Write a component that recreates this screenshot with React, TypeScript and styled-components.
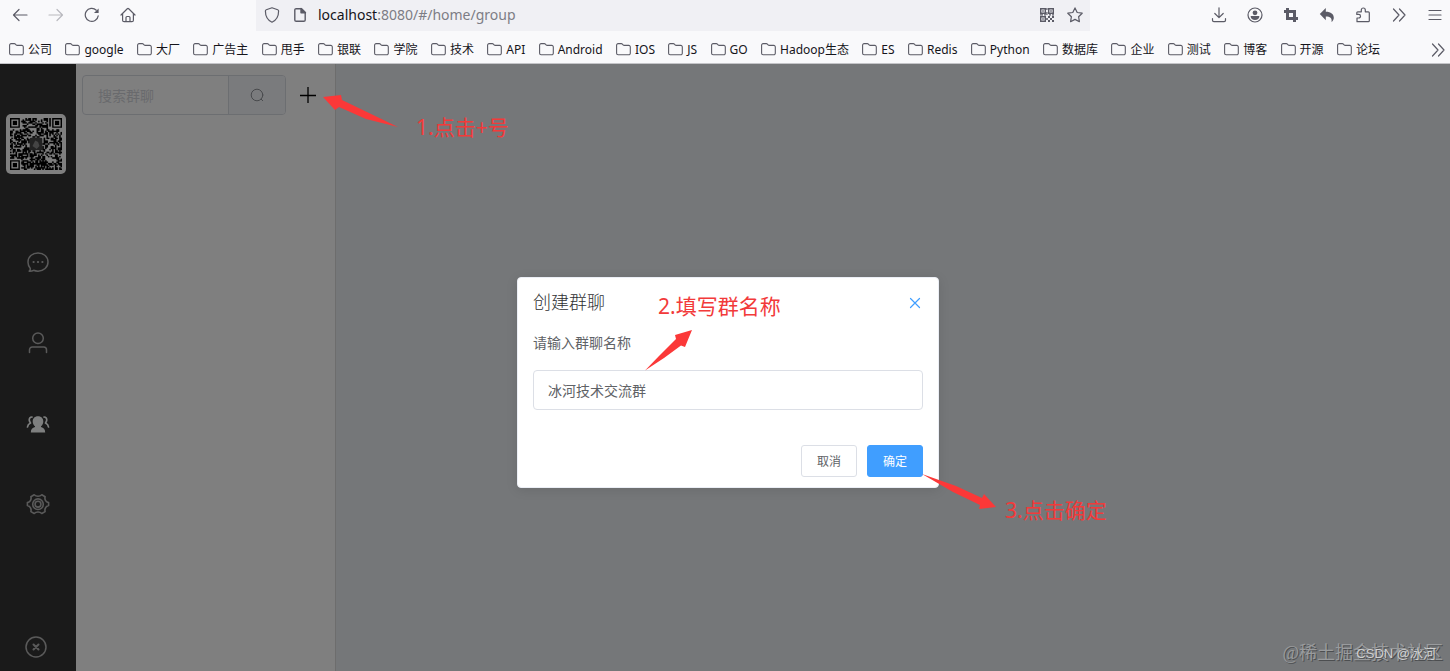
import React from "react";
import styled, { createGlobalStyle } from "styled-components";

const GlobalStyle = createGlobalStyle`
  *, *::before, *::after { box-sizing: border-box; }
  body { margin: 0; font-family: "Noto Sans", "Noto Sans CJK SC", sans-serif; }
  button, input { font-family: inherit; }
`;

const Shell = styled.div`
  display: flex;
  flex-direction: column;
  min-height: 100vh;
  overflow: hidden;
`;

/* ---------- browser chrome ---------- */

const Chrome = styled.header`
  background: #f9f9fb;
  border-bottom: 1px solid #c4c4c8;
`;

const Toolbar = styled.div`
  display: flex;
  height: 31px;
`;

const ToolGroup = styled.div<{ $side: "left" | "right" }>`
  display: flex;
  flex: none;
  align-items: center;
  gap: 20px;
  width: ${(p) => (p.$side === "left" ? 256 : 360)}px;
  padding: ${(p) => (p.$side === "left" ? "0 0 1px 12px" : "0 7px 1px 0")};
  justify-content: ${(p) => (p.$side === "left" ? "flex-start" : "flex-end")};
`;

const IconButton = styled.button<{ $dim?: boolean }>`
  display: flex;
  flex: none;
  padding: 0;
  border: 0;
  background: none;
  color: ${(p) => (p.$dim ? "#b9b9be" : "#5b5b66")};
  cursor: pointer;
`;

const AddressBar = styled.div`
  display: flex;
  flex: 1;
  align-items: center;
  gap: 12px;
  padding: 0 7px 1px 8px;
  background: #f0f0f4;
`;

const Url = styled.a`
  flex: 1;
  margin-left: -2px;
  color: #7d7d85;
  font-size: 14px;
  line-height: 20px;
  text-decoration: none;
`;

const Host = styled.span`
  color: #15141a;
`;

const BookmarkBar = styled.nav`
  display: flex;
  align-items: center;
  gap: 50px;
  height: 32px;
  padding: 5px 4px 0 9px;
`;

const BookmarkList = styled.div`
  display: flex;
  flex: 1;
  justify-content: space-between;
`;

const Bookmark = styled.a`
  display: flex;
  align-items: center;
  gap: 4px;
  color: #15141a;
  font-size: 12px;
  line-height: 18px;
  white-space: nowrap;
  text-decoration: none;

  svg { color: #5b5b66; }
`;

/* ---------- chat application ---------- */

const Page = styled.div`
  position: relative;
  display: flex;
  flex: 1;
`;

const Sidebar = styled.aside`
  display: flex;
  flex: none;
  flex-direction: column;
  align-items: center;
  width: 76px;
  padding: 50px 0 12px;
  background: #353535;
`;

const Avatar = styled.button`
  display: flex;
  width: 60px;
  height: 60px;
  margin-right: 4px;
  padding: 4px;
  border: 0;
  border-radius: 5px;
  background: #fff;
`;

const SideNav = styled.nav`
  display: flex;
  flex: 1;
  flex-direction: column;
  gap: 57px;
  margin-top: 76px;
`;

const SideLink = styled.a<{ $active?: boolean }>`
  display: flex;
  color: ${(p) => (p.$active ? "#fcfffe" : "#b4b4b4")};
`;

const Exit = styled.button`
  display: flex;
  margin-right: 4px;
  padding: 0;
  border: 0;
  background: none;
  color: #b4b4b4;
`;

const GroupPanel = styled.section`
  flex: none;
  width: 260px;
  padding: 11px 0 0 6px;
  background: #fff;
  border-right: 1px solid #dadada;
`;

const SearchRow = styled.div`
  display: flex;
  align-items: center;
  gap: 14px;
`;

const SearchBox = styled.form`
  display: flex;
  width: 204px;
  height: 40px;
  border: 1px solid #d9dce2;
  border-radius: 4px;
  overflow: hidden;
`;

const SearchInput = styled.input`
  flex: 1;
  min-width: 0;
  padding: 0 15px;
  border: 0;
  background: none;
  font-size: 14px;

  &::placeholder { color: #d3d5da; }
`;

const SearchButton = styled.button`
  display: flex;
  align-items: center;
  justify-content: center;
  width: 57px;
  padding: 0;
  border: 0;
  border-left: 1px solid #d9dce2;
  background: #f5f7fa;
  color: #909399;
`;

const AddButton = styled.button`
  display: flex;
  padding: 0;
  border: 0;
  background: none;
  color: #000;
`;

const Conversation = styled.main`
  flex: 1;
  background: #eaeef2;
`;

const Overlay = styled.div`
  position: absolute;
  inset: 0;
  display: flex;
  align-items: center;
  justify-content: center;
  padding: 30px 0 0 6px;
  background: rgba(0, 0, 0, 0.5);
`;

const Dialog = styled.form`
  position: relative;
  width: 422px;
  padding-bottom: 10px;
  border: 1px solid #ebeef5;
  border-radius: 4px;
  background: #fff;
  box-shadow: 0 2px 12px rgba(0, 0, 0, 0.1);
`;

const DialogHeader = styled.div`
  display: flex;
  align-items: center;
  justify-content: space-between;
  padding: 15px 15px 10px;
`;

const DialogTitle = styled.h1`
  margin: 0;
  color: #303133;
  font-size: 18px;
  font-weight: 300;
  line-height: 18px;
`;

const CloseButton = styled.button`
  display: flex;
  padding: 0;
  border: 0;
  background: none;
  color: #409eff;
`;

const DialogBody = styled.div`
  display: flex;
  flex-direction: column;
  gap: 15px;
  padding: 10px 15px 30px;
`;

const Label = styled.label`
  color: #606266;
  font-size: 14px;
  line-height: 24px;
`;

const TextField = styled.input`
  width: 100%;
  height: 40px;
  padding: 0 14px;
  border: 1px solid #dcdfe6;
  border-radius: 4px;
  color: #606266;
  font-size: 14px;
`;

const DialogActions = styled.div`
  display: flex;
  justify-content: flex-end;
  gap: 10px;
  padding: 5px 15px 0;
`;

const ActionButton = styled.button<{ $primary?: boolean }>`
  width: 56px;
  height: 32px;
  padding: 0;
  border: 1px solid ${(p) => (p.$primary ? "#409eff" : "#dcdfe6")};
  border-radius: 3px;
  background: ${(p) => (p.$primary ? "#409eff" : "#fff")};
  color: ${(p) => (p.$primary ? "#fff" : "#606266")};
  font-size: 12px;
`;

/* ---------- notes drawn over the page ---------- */

const Note = styled.span<{ $x: number; $y: number }>`
  position: absolute;
  left: ${(p) => p.$x}px;
  top: ${(p) => p.$y}px;
  color: #f23a3a;
  font-size: 21px;
  line-height: 30px;
  white-space: nowrap;
`;

const Arrow = styled.svg<{ $x: number; $y: number }>`
  position: absolute;
  left: ${(p) => p.$x}px;
  top: ${(p) => p.$y}px;
  fill: #fb3838;
  pointer-events: none;
`;

const SiteMark = styled.span`
  position: absolute;
  right: 7px;
  bottom: 4px;
  color: #999b9d;
  font-family: "Liberation Serif", "Noto Sans CJK SC", serif;
  font-size: 18px;
  line-height: 28px;
  text-shadow: 1px 1px 0 #4c4e50;
`;

const AuthorMark = styled.span`
  position: absolute;
  right: 14px;
  bottom: 7px;
  color: #cfd0d1;
  font-family: "Liberation Sans", "Noto Sans CJK SC", sans-serif;
  font-size: 13px;
  line-height: 20px;
  text-shadow: 1px 1px 0 #55575a;
`;

/* ---------- icons ---------- */

type IconProps = { size?: number; box?: number; width?: number; children: React.ReactNode };

const Icon = ({ size = 16, box = 16, width = 1.2, children }: IconProps) => (
  <svg
    width={size}
    height={size}
    viewBox={`0 0 ${box} ${box}`}
    fill="none"
    stroke="currentColor"
    strokeWidth={width}
    strokeLinecap="round"
    strokeLinejoin="round"
    aria-hidden="true"
  >
    {children}
  </svg>
);

const FolderIcon = () => (
  <svg width="15" height="14" viewBox="0 0 15 14" fill="none" stroke="currentColor" strokeWidth="1.1" aria-hidden="true">
    <path d="M.6 10.3V2.1A1.500 1.500 0 0 1 2.100.6h3.200c.4 0 .8.2 1.100.5l.9 1c.2.2.5.3.8.3h4.700a1.500 1.500 0 0 1 1.500 1.500v6.400a1.500 1.500 0 0 1-1.500 1.500H2.100a1.500 1.500 0 0 1-1.500-1.500z" />
  </svg>
);

const ChevronsIcon = () => (
  <Icon><path d="M2.500 2l5.500 6-5.500 6M8.500 2l5.500 6-5.500 6" /></Icon>
);

const SmallQrIcon = () => (
  <Icon width={1.4}>
    <path strokeLinecap="butt" strokeLinejoin="miter" d="M1.700 1.700h4.600v4.600H1.700zM9.700 1.700h4.600v4.600H9.700zM1.700 9.700h4.600v4.600H1.700z" />
    <path fill="currentColor" stroke="none" d="M3.300 3.300h1.400v1.400H3.300zM11.300 3.300h1.400v1.400h-1.400zM3.300 11.300h1.400v1.400H3.300zM7.300 1h1.200v2H7.300zM7.300 5h1.200v3H7.300zM1 7.300h3v1.200H1zM5 7.300h2v1.200H5zM9 9h2v2H9zM11 11h2v2h-2zM13 9h2v2h-2zM9 13h2v2H9zM13 13h2v2h-2zM7.200 11h1.600v2H7.200zM10 7.300h2v1.200h-2zM13 7.300h2v1.200h-2z" />
  </Icon>
);

const QR_SIZE = 37;

const inFinder = (x: number, y: number) =>
  (x < 8 && y < 8) || (x > QR_SIZE - 9 && y < 8) || (x < 8 && y > QR_SIZE - 9);

const qrModules = (() => {
  let seed = 20231;
  let path = "";
  for (let y = 0; y < QR_SIZE; y++) {
    for (let x = 0; x < QR_SIZE; x++) {
      seed = (seed * 1103515245 + 12345) % 2147483648;
      const centre = x > 13 && x < 23 && y > 13 && y < 23;
      if (!inFinder(x, y) && !centre && seed / 2147483648 > 0.46) {
        path += `M${x} ${y}h1v1h-1z`;
      }
    }
  }
  return path;
})();

const QrCode = () => (
  <svg width="52" height="52" viewBox="0 0 37 37" aria-hidden="true">
    <path d={qrModules} stroke="#000" strokeWidth="0.15" />
    {[[0, 0], [30, 0], [0, 30]].map(([x, y]) => (
      <g key={`${x}-${y}`}>
        <path fillRule="evenodd" d={`M${x} ${y}h7v7h-7zM${x + 1} ${y + 1}v5h5v-5z`} />
        <rect x={x + 2} y={y + 2} width="3" height="3" />
      </g>
    ))}
    <rect x="14" y="14" width="9" height="9" rx="1" fill="#444" />
    <path d="M16 20l2-4 2 1 1 3-2 2z" fill="#888" />
  </svg>
);

const ChatIcon = () => (
  <Icon size={24} box={24} width={1.5}>
    <path d="M3.200 21.200c1-.8 1.300-1.800 1-3A9.300 9.300 0 0 1 2 12c0-5.200 4.300-9 10-9s10 3.800 10 9-4.300 9.200-10 9.200c-1.600 0-3.100-.3-4.400-.9-1.200.7-2.700 1-4.400.9z" />
    <path strokeWidth="2" d="M7.500 12h.2M11.900 12h.2M16.300 12h.2" />
  </Icon>
);

const UserIcon = () => (
  <Icon size={24} box={24} width={1.5}>
    <circle cx="12" cy="7.3" r="5.3" />
    <path d="M3.500 21.500v-2.700a2.800 2.800 0 0 1 2.800-2.800h11.400a2.800 2.800 0 0 1 2.800 2.800v2.700" />
  </Icon>
);

const GroupIcon = () => (
  <Icon size={24} box={24} width={1.7}>
    <path fill="currentColor" stroke="none" d="M12 4.200c3.300 0 5.300 2.200 5.300 5.200 0 2.200-1 3.800-2.300 4.900v.8c2.500.7 4.200 2.100 4.200 5.400H4.800c0-3.300 1.700-4.700 4.200-5.400v-.8c-1.300-1.100-2.300-2.700-2.300-4.900 0-3 2-5.200 5.300-5.200z" />
    <path d="M6 5c-2 0-3 1.500-2.700 3.400.2 1.200.6 1.800 1.200 2.600-1.700.8-2.800 1.900-3 4M18 5c2 0 3 1.500 2.700 3.400-.2 1.200-.6 1.800-1.200 2.600 1.700.8 2.800 1.900 3 4" />
  </Icon>
);

const GearIcon = () => (
  <Icon size={24} box={24} width={1.6}>
    <path d="M8.200 1.800c1.100 1.100 2.400 1.400 3.800 1.400s2.700-.3 3.800-1.400l3.300 1.900c-.4 1.600-.2 2.800.5 3.900.6 1.100 1.500 1.700 3 2v3c-1.500.4-2.400 1-3 2.100-.7 1.100-.9 2.300-.5 3.900l-3.300 1.900c-1.100-1.100-2.400-1.500-3.800-1.500s-2.700.4-3.800 1.500l-3.300-1.900c.4-1.600.2-2.800-.5-3.900-.6-1.100-1.500-1.700-3-2.100v-3c1.500-.3 2.400-.9 3-2 .7-1.100.9-2.300.5-3.900z" />
    <circle cx="12" cy="11.2" r="5.3" />
    <circle cx="12" cy="11.2" r="2.900" />
  </Icon>
);

const bookmarks = [
  "公司", "google", "大厂", "广告主", "甩手", "银联", "学院", "技术", "API", "Android", "IOS", "JS",
  "GO", "Hadoop生态", "ES", "Redis", "Python", "数据库", "企业", "测试", "博客", "开源", "论坛",
];

const sideLinks = [
  { name: "消息", href: "#/home/chat", icon: <ChatIcon /> },
  { name: "好友", href: "#/home/friend", icon: <UserIcon /> },
  { name: "群聊", href: "#/home/group", icon: <GroupIcon />, active: true },
  { name: "设置", href: "#/home/setting", icon: <GearIcon /> },
];

const BrowserChrome = () => (
  <Chrome>
    <Toolbar>
      <ToolGroup $side="left">
        <IconButton aria-label="后退"><Icon><path d="M15 8H1.500M7 2.500L1.500 8 7 13.500" /></Icon></IconButton>
        <IconButton aria-label="前进" $dim><Icon><path d="M1 8h13.500M9 2.500L14.500 8 9 13.500" /></Icon></IconButton>
        <IconButton aria-label="刷新">
          <Icon>
            <path d="M14.200 8.800A6.500 6.500 0 1 1 12.300 3.200" />
            <path d="M14.600 1.500v4.600H10z" fill="currentColor" stroke="none" />
          </Icon>
        </IconButton>
        <IconButton aria-label="主页">
          <Icon>
            <path d="M1 8l6.300-6.200a1 1 0 0 1 1.400 0L15 8M2.600 6.800v6.400c0 .9.600 1.500 1.500 1.500h7.800c.9 0 1.500-.6 1.500-1.500V6.800" />
            <path d="M6 14.500v-4A1 1 0 0 1 7 9.500h2a1 1 0 0 1 1 1v4" />
          </Icon>
        </IconButton>
      </ToolGroup>
      <AddressBar>
        <IconButton aria-label="跟踪保护">
          <Icon><path d="M8 .8l5.700 2c.6.200.9.600.9 1.200 0 4.800-1.800 9-6.600 11.200C3.200 13 1.400 8.800 1.400 4c0-.6.300-1 .9-1.200z" /></Icon>
        </IconButton>
        <IconButton aria-label="网站信息">
          <Icon width={1.4}>
            <path d="M9.500 1.700H4.200c-.8 0-1.400.6-1.400 1.400v9.800c0 .8.600 1.400 1.400 1.400h7.600c.8 0 1.400-.6 1.400-1.400V5.400z" />
            <path d="M9 1.500v4.300h4.500z" fill="currentColor" />
          </Icon>
        </IconButton>
        <Url href="#/home/group"><Host>localhost</Host>:8080/#/home/group</Url>
        <IconButton aria-label="二维码"><SmallQrIcon /></IconButton>
        <IconButton aria-label="收藏">
          <Icon><path d="M8 .9l2.200 4.600 5 .7-3.600 3.500.8 5L8 12.400l-4.400 2.300.8-5L.8 6.200l5-.7z" /></Icon>
        </IconButton>
      </AddressBar>
      <ToolGroup $side="right">
        <IconButton aria-label="下载">
          <Icon><path d="M8 .8v9.700M3.800 6.500L8 10.600l4.200-4.100M1.500 11.500v1.700c0 .8.600 1.400 1.400 1.400h10.200c.8 0 1.400-.6 1.400-1.400v-1.700" /></Icon>
        </IconButton>
        <IconButton aria-label="账户">
          <Icon>
            <circle cx="8" cy="8" r="7" />
            <circle cx="8" cy="5.800" r="2.400" fill="currentColor" stroke="none" />
            <path d="M3.600 9h8.800c0 2.500-1.900 4-4.400 4s-4.400-1.500-4.400-4z" fill="currentColor" stroke="none" />
          </Icon>
        </IconButton>
        <IconButton aria-label="截图">
          <Icon width={3}><path strokeLinecap="butt" strokeLinejoin="miter" d="M1 4.500h10.500V15M4.500 1v10.500H15" /></Icon>
        </IconButton>
        <IconButton aria-label="撤销">
          <Icon><path fill="currentColor" stroke="none" d="M6.800 1v3.700c5.200 0 8 2.500 8 6 0 1.700-.8 3.200-2.300 4.300.8-3.600-1.400-5.400-5.700-5.400v3.600L.8 7z" /></Icon>
        </IconButton>
        <IconButton aria-label="扩展">
          <Icon><path d="M2 14.700V11h1.700a1.800 1.800 0 0 0 0-3.600H1.800V5.800c0-.6.500-1 1-1h3.500V3a2 2 0 0 1 4 0v1.800h3c.6 0 1 .4 1 1v7.900c0 .6-.4 1-1 1z" /></Icon>
        </IconButton>
        <IconButton aria-label="更多工具"><ChevronsIcon /></IconButton>
        <IconButton aria-label="菜单"><Icon><path d="M2 3.500h12M2 8h12M2 12.500h12" /></Icon></IconButton>
      </ToolGroup>
    </Toolbar>
    <BookmarkBar aria-label="书签">
      <BookmarkList>
        {bookmarks.map((name) => (
          <Bookmark key={name} href="#"><FolderIcon />{name}</Bookmark>
        ))}
      </BookmarkList>
      <IconButton aria-label="更多书签"><ChevronsIcon /></IconButton>
    </BookmarkBar>
  </Chrome>
);

const CreateGroupDialog = () => (
  <Dialog role="dialog" aria-labelledby="dialog-title" onSubmit={(e) => e.preventDefault()}>
    <DialogHeader>
      <DialogTitle id="dialog-title">创建群聊</DialogTitle>
      <CloseButton type="button" aria-label="关闭">
        <Icon><path d="M3.500 4.500l9 9M12.500 4.500l-9 9" /></Icon>
      </CloseButton>
    </DialogHeader>
    <DialogBody>
      <Label htmlFor="group-name">请输入群聊名称</Label>
      <TextField id="group-name" type="text" defaultValue="冰河技术交流群" />
    </DialogBody>
    <DialogActions>
      <ActionButton type="button">取消</ActionButton>
      <ActionButton type="submit" $primary>确定</ActionButton>
    </DialogActions>
    <Note $x={140} $y={13}>2.填写群名称</Note>
    <Arrow $x={127} $y={52} width="48" height="41" viewBox="0 0 48 41">
      <path d="M0 40.500L14 26 31 9 30 5 47 0 40 17 36 15.500 19 28z" />
    </Arrow>
    <Arrow $x={404} $y={195} width="75" height="38" viewBox="0 0 75 38">
      <path d="M0 1L34 13 60 25 62 21 74 34 57 36 58 32 31 19z" />
    </Arrow>
    <Note $x={487} $y={217}>3.点击确定</Note>
  </Dialog>
);

export default function App() {
  return (
    <Shell>
      <GlobalStyle />
      <BrowserChrome />
      <Page>
        <Sidebar>
          <Avatar aria-label="头像"><QrCode /></Avatar>
          <SideNav>
            {sideLinks.map((link) => (
              <SideLink key={link.name} href={link.href} aria-label={link.name} $active={link.active}>
                {link.icon}
              </SideLink>
            ))}
          </SideNav>
          <Exit aria-label="退出">
            <Icon size={24} box={24} width={1.5}>
              <circle cx="12" cy="12" r="10" />
              <path strokeWidth="2" d="M9.500 9.500l5 5M14.500 9.500l-5 5" />
            </Icon>
          </Exit>
        </Sidebar>
        <GroupPanel>
          <SearchRow>
            <SearchBox role="search" onSubmit={(e) => e.preventDefault()}>
              <SearchInput type="search" aria-label="搜索群聊" placeholder="搜索群聊" />
              <SearchButton type="submit" aria-label="搜索">
                <Icon width={1}><path d="M12.200 12.200l1.500 1.500" /><circle cx="8" cy="8" r="5.800" /></Icon>
              </SearchButton>
            </SearchBox>
            <AddButton aria-label="创建群聊">
              <Icon width={1.3}><path strokeLinecap="butt" d="M8 0v16M0 8.500h16" /></Icon>
            </AddButton>
          </SearchRow>
        </GroupPanel>
        <Conversation />
        <Overlay>
          <CreateGroupDialog />
          <Arrow $x={323} $y={31} width="76" height="33" viewBox="0 0 76 33">
            <path d="M0 2L18 0 19 5 46 18 75 32 43 24 16 12 12 15z" />
          </Arrow>
          <Note $x={416} $y={48}>1.点击+号</Note>
          <SiteMark>@稀土掘金技术社区</SiteMark>
          <AuthorMark>CSDN @冰河</AuthorMark>
        </Overlay>
      </Page>
    </Shell>
  );
}
